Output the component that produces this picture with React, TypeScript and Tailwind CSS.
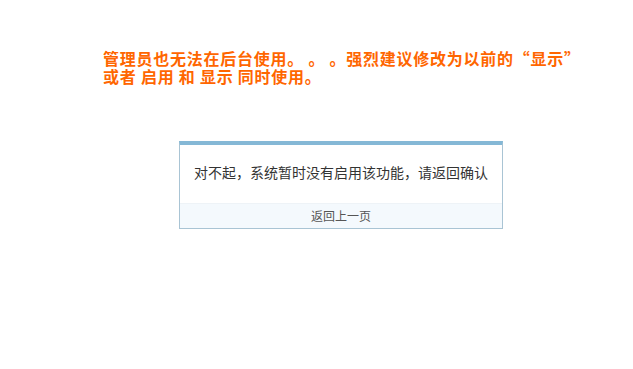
export default function App() {
  return (
    <div className="w-[633px] h-[369px] bg-white font-['Noto_Sans_CJK_SC',sans-serif] overflow-hidden">
      <div className="pt-[49px] pl-[103px] text-[16px] leading-[18px] font-bold tracking-[0.75px] text-[#ff6600]">
        <p>管理员也无法在后台使用。 。 。强烈建议修改为以前的“显示”</p>
        <p>或者 启用 和 显示 同时使用。</p>
      </div>

      <div className="ml-[179px] mt-[56px] w-[324px] border border-[#a9c4d4] border-t-4 border-t-[#85b8d6]">
        <div className="h-[58px] pb-[3px] flex items-center justify-center text-[14px] text-[#333]">
          对不起，系统暂时没有启用该功能，请返回确认
        </div>
        <div className="h-[25px] bg-[#f4f9fd] border-t border-[#eef3f7] flex items-center justify-center text-[12px] text-[#555]">
          返回上一页
        </div>
      </div>
    </div>
  );
}
